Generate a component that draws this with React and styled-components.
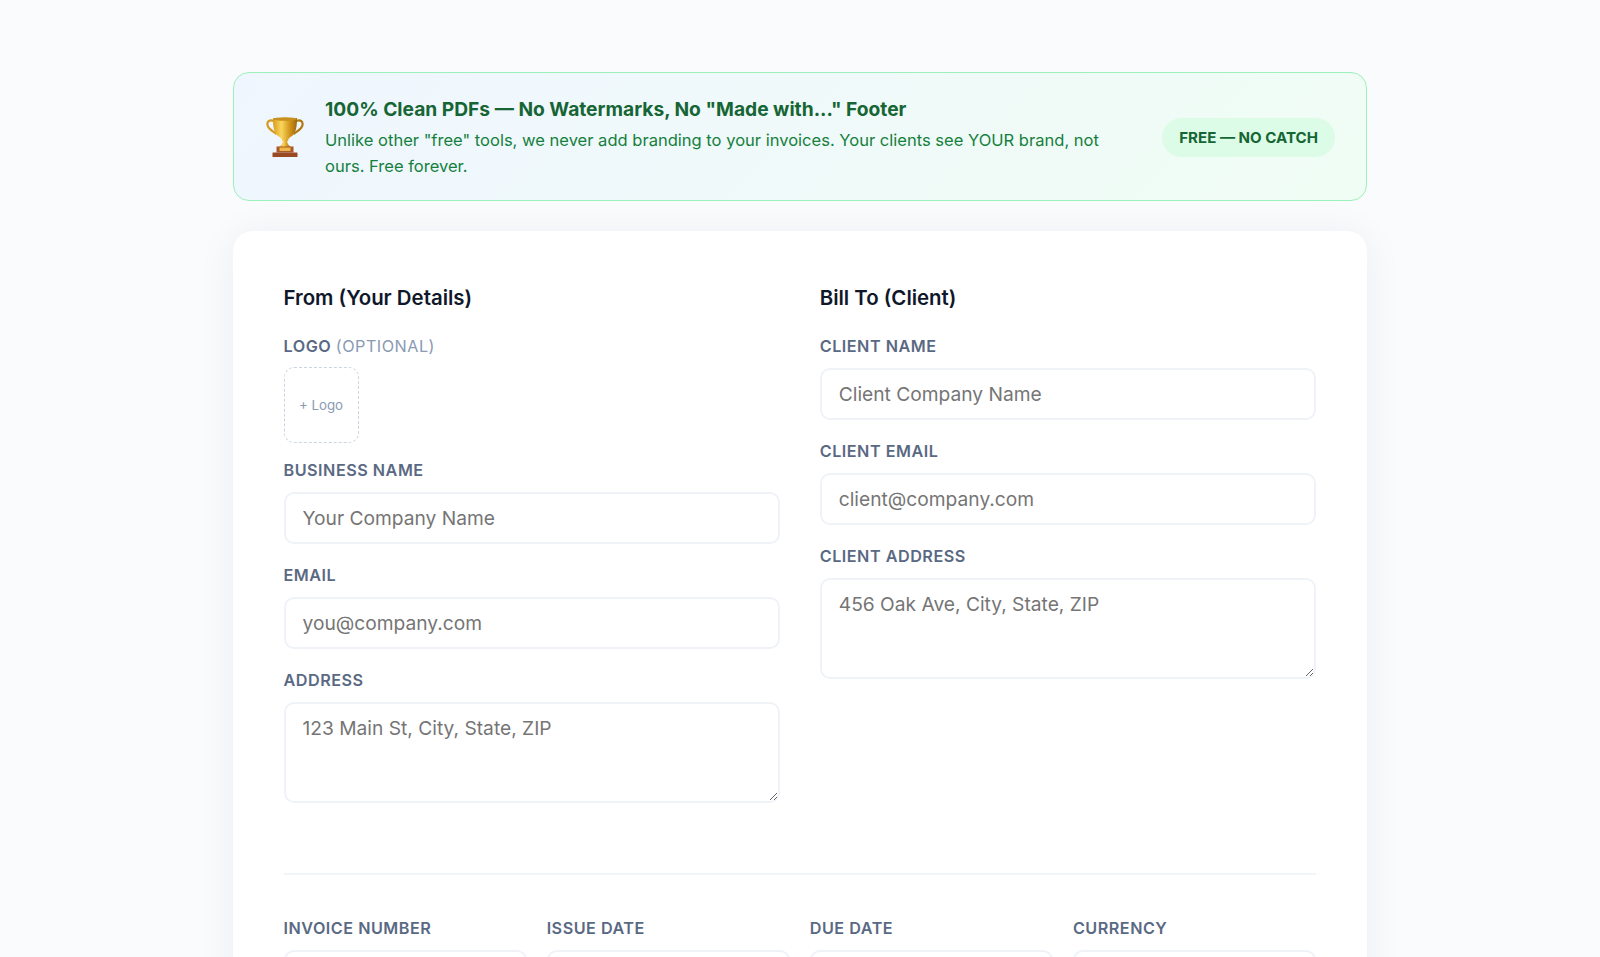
import React from "react";
import styled, { createGlobalStyle } from "styled-components";

const Global = createGlobalStyle`
  html, body { margin: 0; height: 100%; overflow: hidden; background: #fafbfd; }
  * { box-sizing: border-box; }
  body { font-family: Inter, "Liberation Sans", sans-serif; -webkit-font-smoothing: antialiased; }
`;
const Page = styled.main`
  width: 1134px;
  margin: 0 auto;
  padding-top: 72px;
  display: flex;
  flex-direction: column;
  gap: 30px;
`;
const Banner = styled.section`
  height: 129px;
  display: flex;
  align-items: center;
  gap: 20px;
  padding: 1px 31px 0;
  border: 1px solid #9cf0b9;
  border-radius: 16px;
  background: linear-gradient(135deg, #eff6ff 0%, #f0fdf4 100%);
`;
const TrophyIcon = styled.svg`
  width: 38px;
  height: 40px;
  margin: 0 1px;
  flex: none;
`;
const BannerText = styled.div`
  flex: 1;
  min-width: 0;
`;
const BannerTitle = styled.h2`
  margin: 0 0 4px;
  font-size: 19.2px;
  line-height: 28px;
  font-weight: 700;
  color: #166534;
`;
const BannerBody = styled.p`
  margin: 0;
  font-size: 16.55px;
  line-height: 26px;
  color: #15803d;
`;
const Badge = styled.span`
  flex: none;
  margin-left: 20px;
  padding: 0 17px;
  height: 39px;
  display: flex;
  align-items: center;
  border-radius: 20px;
  background: #dcfce7;
  color: #166534;
  font-size: 15.1px;
  font-weight: 700;
  white-space: nowrap;
`;
const Card = styled.section`
  background: #fff;
  border-radius: 20px;
  padding: 52px 51px 40px 50.5px;
  box-shadow: 0 4px 40px rgba(30, 41, 59, 0.06);
`;
const Columns = styled.div`
  display: grid;
  grid-template-columns: 1fr 1fr;
  gap: 40px;
  padding-bottom: 70px;
  border-bottom: 2px solid #f1f5f9;
`;
const Column = styled.div`
  min-width: 0;
`;
const Heading = styled.h3`
  margin: 0 0 24px;
  padding-top: 1px;
  font-size: 20.4px;
  line-height: 28px;
  font-weight: 600;
  color: #0f172a;
`;
const Field = styled.div`
  margin-bottom: 21.5px;
  &:last-child { margin-bottom: 0; }
`;
const Label = styled.label`
  display: block;
  margin-bottom: 11px;
  font-size: 16.2px;
  line-height: 21px;
  font-weight: 600;
  letter-spacing: 0.5px;
  text-transform: uppercase;
  color: #5a6983;
`;
const Optional = styled.span`
  font-weight: 400;
  color: #8a9ab3;
`;
const LogoBox = styled.div`
  width: 75px;
  height: 76px;
  margin-top: -1px;
  margin-bottom: -4.5px;
  padding-bottom: 1px;
  display: flex;
  align-items: center;
  justify-content: center;
  border: 1px dashed #cbd5e1;
  border-radius: 10px;
  font-size: 13.3px;
  color: #8a9ab3;
`;
const Input = styled.input`
  display: block;
  width: 100%;
  height: 51.5px;
  padding: 0 17px;
  border: 2px solid #eff3f8;
  border-radius: 10px;
  background: #fff;
  font: 400 19.2px Inter, sans-serif;
  outline: none;
`;
const Area = styled.textarea`
  display: block;
  width: 100%;
  height: 101px;
  padding: 12px 17px;
  border: 2px solid #eff3f8;
  border-radius: 10px;
  background: #fff;
  font: 400 19.2px/24px Inter, sans-serif;
  resize: vertical;
  outline: none;
`;
const Meta = styled.div`
  display: grid;
  grid-template-columns: repeat(4, 1fr);
  gap: 20px;
  padding-top: 43px;
`;
const Select = styled.select`
  display: block;
  width: 100%;
  height: 51.5px;
  padding: 0 17px;
  border: 2px solid #eff3f8;
  border-radius: 10px;
  background: #fff;
  font: 400 19.2px Inter, sans-serif;
`;

const Trophy = () => (
  <TrophyIcon viewBox="0 0 38 40" aria-hidden="true">
    <defs>
      <linearGradient id="gold" x1="0" x2="1" y1="0" y2="0">
        <stop offset="0" stopColor="#dc9c1c" />
        <stop offset=".35" stopColor="#f9d65c" />
        <stop offset=".7" stopColor="#d2951a" />
        <stop offset="1" stopColor="#9c680e" />
      </linearGradient>
    </defs>
    <path d="M8 4C3 2 1 5 1.500 8c.5 4 5 6 9 9" fill="none" stroke="#d59a1e" strokeWidth="2.200" />
    <path d="M30 4c5-2 7 1 6.500 4-.5 4-5 6-9 9" fill="none" stroke="#b07a12" strokeWidth="2.200" />
    <path d="M7 1h24c0 9-1 15-5 18-3 2-4 3-4 5h-6c0-2-1-3-4-5-4-3-5-9-5-18z" fill="url(#gold)" />
    <ellipse cx="19" cy="2" rx="12" ry="1.800" fill="#c8901c" />
    <path d="M17 23h4c0 3 1 5 4 7H13c3-2 4-4 4-7z" fill="url(#gold)" />
    <rect x="10.500" y="29.500" width="17" height="6" fill="#a8582a" />
    <rect x="13.500" y="30.500" width="11" height="3.500" fill="#eeb848" />
    <rect x="6.500" y="35.500" width="25" height="4.500" rx=".5" fill="#9a4a22" />
  </TrophyIcon>
);

const TextField = ({ label, placeholder }) => (
  <Field>
    <Label>{label}</Label>
    <Input placeholder={placeholder} />
  </Field>
);
const AreaField = ({ label, placeholder }) => (
  <Field>
    <Label>{label}</Label>
    <Area placeholder={placeholder} />
  </Field>
);

export default function App() {
  return (
    <Page>
      <Global />
      <Banner>
        <Trophy />
        <BannerText>
          <BannerTitle>100% Clean PDFs — No Watermarks, No "Made with..." Footer</BannerTitle>
          <BannerBody>
            Unlike other "free" tools, we never add branding to your invoices. Your clients see YOUR brand, not ours. Free forever.
          </BannerBody>
        </BannerText>
        <Badge>FREE — NO CATCH</Badge>
      </Banner>
      <Card>
        <Columns>
          <Column>
            <Heading>From (Your Details)</Heading>
            <Field>
              <Label>Logo <Optional>(optional)</Optional></Label>
              <LogoBox>+ Logo</LogoBox>
            </Field>
            <TextField label="Business Name" placeholder="Your Company Name" />
            <TextField label="Email" placeholder="you@company.com" />
            <AreaField label="Address" placeholder="123 Main St, City, State, ZIP" />
          </Column>
          <Column>
            <Heading>Bill To (Client)</Heading>
            <TextField label="Client Name" placeholder="Client Company Name" />
            <TextField label="Client Email" placeholder="client@company.com" />
            <AreaField label="Client Address" placeholder="456 Oak Ave, City, State, ZIP" />
          </Column>
        </Columns>
        <Meta>
          <Field><Label>Invoice Number</Label><Input /></Field>
          <Field><Label>Issue Date</Label><Input /></Field>
          <Field><Label>Due Date</Label><Input /></Field>
          <Field><Label>Currency</Label><Select /></Field>
        </Meta>
      </Card>
    </Page>
  );
}
